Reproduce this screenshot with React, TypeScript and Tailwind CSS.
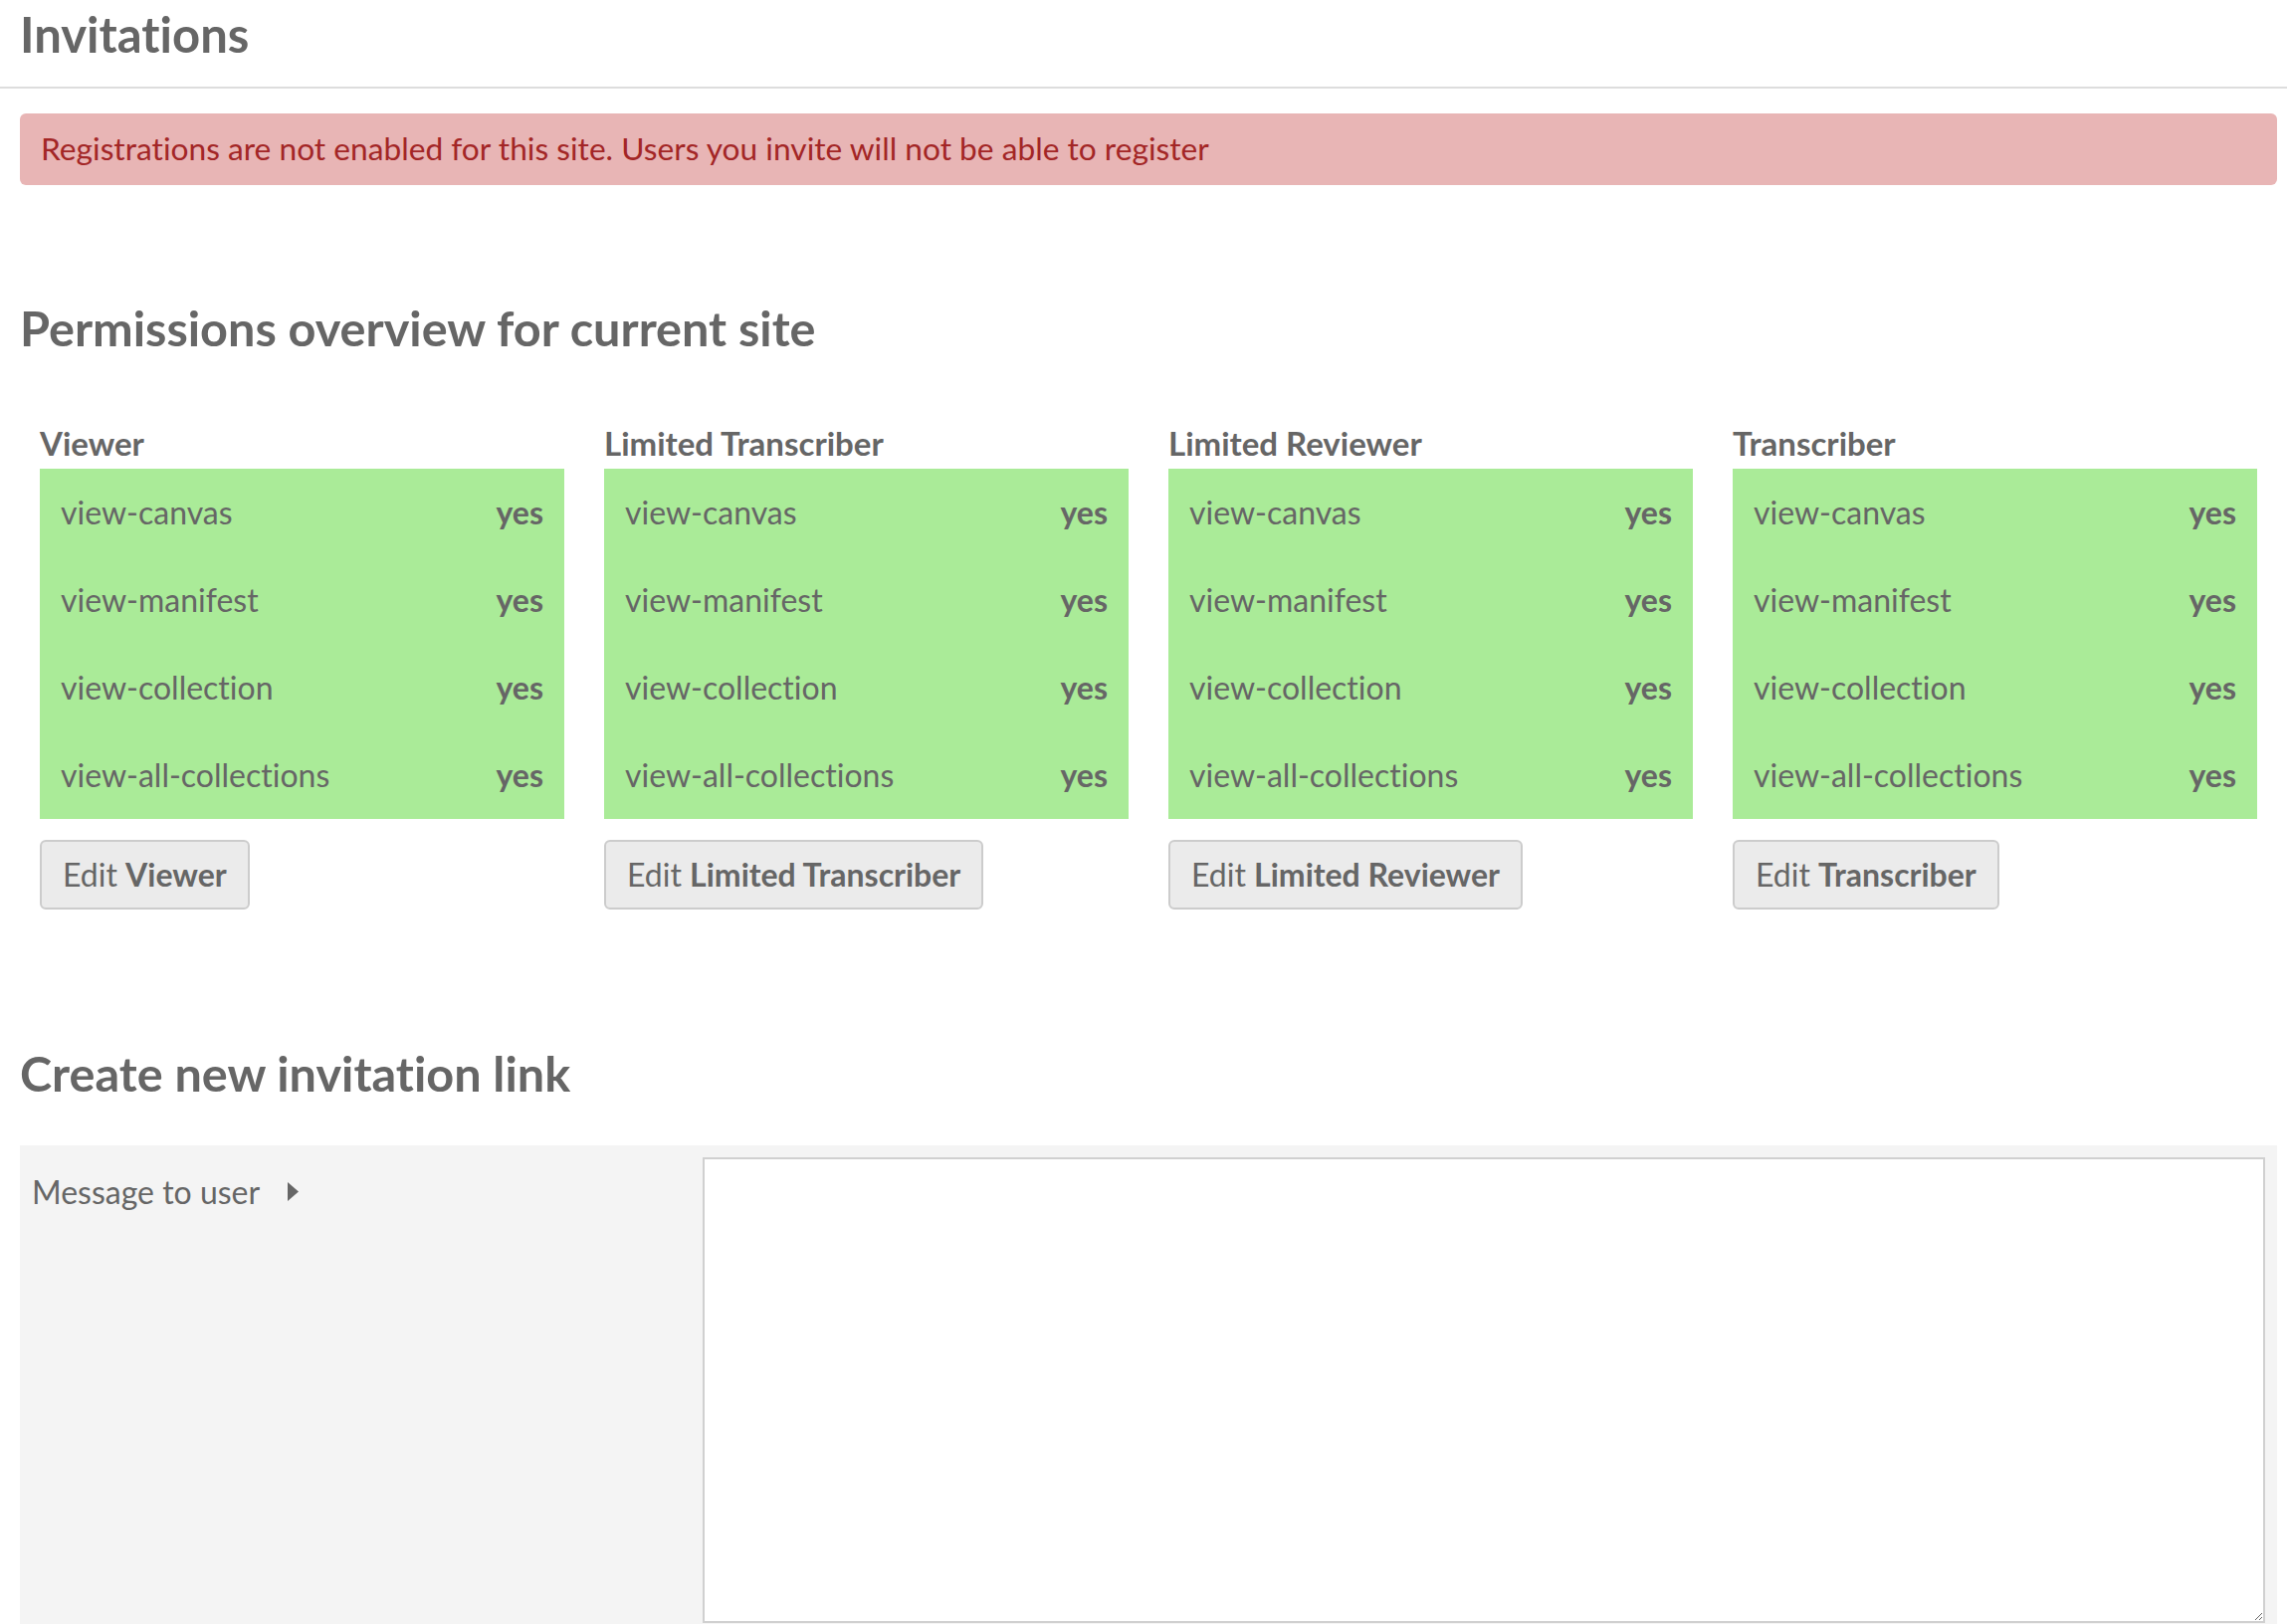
import React from "react";

const roles = ["Viewer", "Limited Transcriber", "Limited Reviewer", "Transcriber"];
const perms = ["view-canvas", "view-manifest", "view-collection", "view-all-collections"];

export default function App() {
  return (
    <div
      className="w-[2298px] h-[1632px] overflow-hidden bg-white text-[#666] [font-variant-ligatures:none]"
      style={{ fontFamily: "Lato, 'Noto Sans', sans-serif" }}
    >
      <h1 className="px-[20px] pt-[5px] pb-[23px] text-[49px] leading-[1.2] font-bold border-b-2 border-[#dddddd]">Invitations</h1>
      <div className="pl-[20px] pr-[10px]">
        <div className="mt-[25px] h-[72px] flex items-center px-[21px] rounded-[6px] bg-[#e8b5b5] text-[#a32626] text-[31.7px]">
          Registrations are not enabled for this site. Users you invite will not be able to register
        </div>
        <h2 className="mt-[114px] text-[48.6px] leading-[1.2] font-bold">Permissions overview for current site</h2>
        <div className="mt-[68px] grid grid-cols-4 gap-x-[40px] px-[20px]">
          {roles.map((r) => (
            <div key={r} className="flex flex-col items-start">
              <div className="text-[33px] leading-[1.2] font-bold mb-[5px]">{r}</div>
              <div className="w-full bg-[#aaeb98]">
                {perms.map((p) => (
                  <div key={p} className="h-[88px] flex items-center justify-between px-[21px] text-[32px]">
                    <span>{p}</span>
                    <span className="font-bold">yes</span>
                  </div>
                ))}
              </div>
              <button className="mt-[21px] h-[70px] px-[21px] rounded-[6px] border-2 border-[#cccccc] bg-[#ebebeb] text-[32px] text-[#666]">
                Edit <span className="font-bold">{r}</span>
              </button>
            </div>
          ))}
        </div>
        <h2 className="mt-[135px] text-[48.6px] leading-[1.2] font-bold">Create new invitation link</h2>
        <div className="mt-[44px] bg-[#f4f4f4] p-[12px] flex">
          <div className="w-[674px] shrink-0 pt-[5px] flex items-center h-[64px] self-start">
            <span className="text-[32px] leading-[45px]">Message to user</span>
            <svg className="ml-[27px]" width="13" height="21" viewBox="0 0 13 21">
              <path d="M1 1 L12 10.5 L1 20 Z" fill="#666" />
            </svg>
          </div>
          <textarea className="flex-1 h-[468px] border-2 border-[#d0d0d0] bg-white outline-none" />
        </div>
      </div>
    </div>
  );
}
